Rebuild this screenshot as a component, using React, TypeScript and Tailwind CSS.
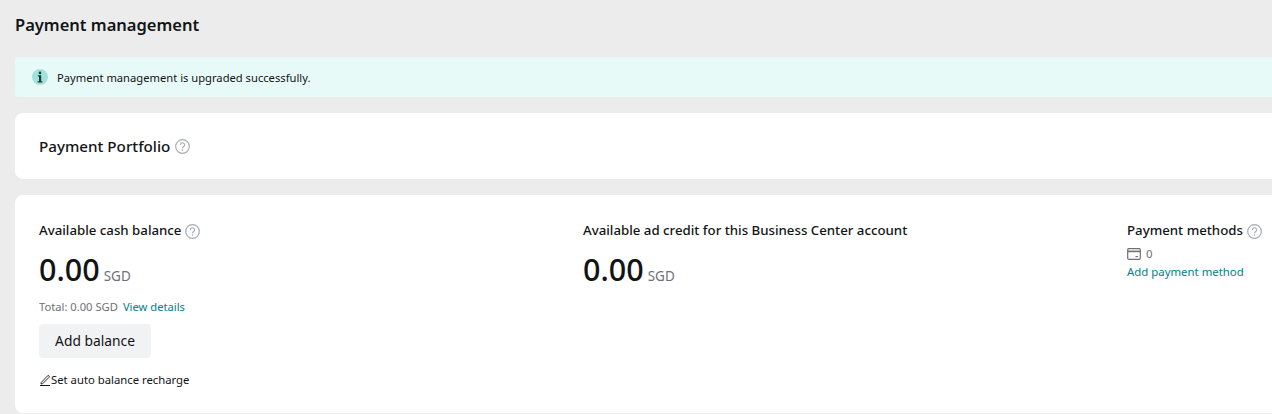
function HelpIcon() {
  return (
    <svg width="15" height="15" viewBox="0 0 15 15" fill="none" className="shrink-0">
      <circle cx="7.5" cy="7.5" r="6.8" stroke="#a8abb0" strokeWidth="1.2" />
      <path d="M5.4 5.9a2.1 2.1 0 1 1 3.3 1.7c-.7.5-1.2.9-1.2 1.7" stroke="#a8abb0" strokeWidth="1.2" fill="none" />
      <circle cx="7.5" cy="11.1" r=".8" fill="#a8abb0" />
    </svg>
  )
}

function Amount() {
  return (
    <div className="mt-[5px] flex h-[44px] items-baseline">
      <span className="text-[30.5px] leading-[44px] font-medium text-[#121415]">0.00</span>
      <span className="ml-1 text-[13.5px] text-[#6d7074]">SGD</span>
    </div>
  )
}

export default function App() {
  return (
    <div className="h-[414px] w-[1272px] overflow-hidden bg-[#ececec] pl-[15px] font-['Noto_Sans',sans-serif] text-[#121415]">
      <h1 className="h-[57px] pt-[13px] text-[16.5px] leading-[24px] font-semibold">Payment management</h1>

      <div className="flex h-[40px] w-[1300px] items-center gap-[9px] rounded-sm bg-[#e8faf8] pl-[17px] text-[11.2px]">
        <svg width="16" height="16" viewBox="0 0 16 16" className="shrink-0">
          <circle cx="8" cy="8" r="8" fill="#a3e3dc" />
          <circle cx="8" cy="3.9" r="1.3" fill="#16413e" />
          <path d="M5.8 6.3h3.4v6h1.2v1.2H5.6v-1.2h1.4V7.5H5.8z" fill="#16413e" />
        </svg>
        <span className="pt-[2px]">Payment management is upgraded successfully.</span>
      </div>

      <div className="mt-4 flex h-[66px] w-[1300px] items-center gap-[5px] rounded-lg bg-white pl-6">
        <span className="text-[15.2px] font-medium">Payment Portfolio</span>
        <HelpIcon />
      </div>

      <div className="mt-4 grid h-[218px] w-[1300px] grid-cols-[544px_544px_1fr] rounded-lg bg-white pt-[25px] pl-6">
        <div>
          <div className="flex h-[22px] items-center gap-1">
            <span className="text-[13.25px] font-medium">Available cash balance</span>
            <HelpIcon />
          </div>
          <Amount />
          <div className="mt-[7px] flex h-[18px] items-center gap-[5px] text-[11.2px]">
            <span className="text-[#6d7074]">Total: 0.00 SGD</span>
            <a className="text-[#00808a]">View details</a>
          </div>
          <button className="mt-[8px] block h-[34px] w-[112px] rounded bg-[#f1f2f4] text-[13.8px] text-[#121415]">Add balance</button>
          <div className="mt-[13px] flex h-[18px] items-center text-[11.3px]">
            <svg width="12" height="12" viewBox="0 0 12 12" fill="none" className="shrink-0">
              <path d="M2.2 8.6 2 10l1.5-.2L10 3.3a1 1 0 0 0 0-1.4l-.1-.1a1 1 0 0 0-1.4 0z" stroke="#121415" strokeWidth="0.9" />
              <path d="M1 11.5h10" stroke="#121415" strokeWidth="1" />
            </svg>
            <span>Set auto balance recharge</span>
          </div>
        </div>

        <div>
          <div className="flex h-[22px] items-center text-[13.25px] font-medium">
            Available ad credit for this Business Center account
          </div>
          <Amount />
        </div>

        <div>
          <div className="flex h-[22px] items-center gap-1">
            <span className="text-[13.25px] font-medium">Payment methods</span>
            <HelpIcon />
          </div>
          <div className="mt-[3px] flex h-[17px] items-center gap-[5px] text-[11.4px] text-[#6d7074]">
            <svg width="14" height="12" viewBox="0 0 14 12" fill="none" className="shrink-0">
              <rect x="0.7" y="0.7" width="12.6" height="10.6" rx="1" stroke="#6d7074" strokeWidth="1.2" />
              <path d="M1 3.4h12" stroke="#6d7074" strokeWidth="1.6" />
              <path d="M8.5 8.6h2.5" stroke="#6d7074" strokeWidth="1.1" />
            </svg>
            <span>0</span>
          </div>
          <a className="mt-[1px] block text-[11.4px] leading-[18px] text-[#00808a]">Add payment method</a>
        </div>
      </div>
    </div>
  )
}
